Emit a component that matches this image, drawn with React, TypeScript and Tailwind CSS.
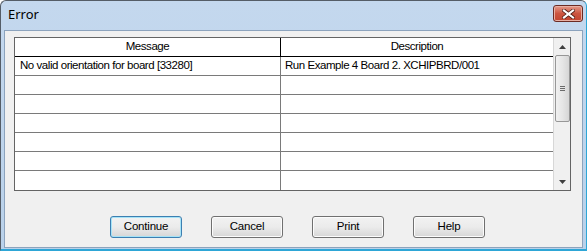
import React from "react";

const rows = [
  ["No valid orientation for board [33280]", "Run Example 4 Board 2. XCHIPBRD/001"],
  ["", ""],
  ["", ""],
  ["", ""],
  ["", ""],
  ["", ""],
  ["", ""],
];

function Btn({ label, focused }: { label: string; focused?: boolean }) {
  return (
    <div
      className={
        "w-[72px] h-[22px] rounded-[3px] border flex items-center justify-center text-[11.5px] tracking-[-0.2px] text-black bg-gradient-to-b from-[#f2f2f2] via-[#ebebeb] to-[#d6d6d6] " +
        (focused ? "border-[#3c7fb1] shadow-[inset_0_0_0_1px_#a6e3f7]" : "border-[#707070] shadow-[inset_0_0_0_1px_#fcfcfc]")
      }
    >
      {label}
    </div>
  );
}

export default function App() {
  return (
    <div
      className="w-[588px] h-[252px] bg-white overflow-hidden"
      style={{ fontFamily: '"Liberation Sans", Arial, sans-serif' }}
    >
      <div className="w-[587px] h-[251px] rounded-t-[6px] border border-[#555d67] border-r-[#2ea6d6] border-b-[#2ea6d6] border-b-2 bg-gradient-to-b from-[#c4d8ee] to-[#b9d1ea] flex flex-col">
        <div className="h-[29px] shrink-0 flex items-center justify-between pl-[7px] pr-[3px] pb-[2px]">
          <span className="text-[13px] text-black" style={{ fontFamily: '"Noto Sans", "Liberation Sans", sans-serif' }}>Error</span>
          <div className="w-[30px] h-[17px] mb-[2px] rounded-[3px] border border-[#6b2b24] bg-gradient-to-b from-[#e39a8b] via-[#cc5540] to-[#c24530] shadow-[inset_0_0_0_1px_#e8b0a4] flex items-center justify-center">
            <svg width="13" height="10" viewBox="0 0 13 10">
              <path d="M2 1.5 L11 8.5 M11 1.5 L2 8.5" stroke="#4a1a12" strokeWidth="3.6" strokeLinecap="square" />
              <path d="M2 1.5 L11 8.5 M11 1.5 L2 8.5" stroke="#ffffff" strokeWidth="2.2" strokeLinecap="square" />
            </svg>
          </div>
        </div>
        <div className="flex-1 mx-[3px] mb-[1px] border border-[#8ca3bd] bg-[#f0f0f0] flex flex-col">
          <div className="mt-[6px] ml-[9px] w-[557px] h-[154px] border border-[#646464] bg-white flex">
            <div className="flex-1 flex flex-col">
              <div className="h-[19px] flex border-b border-black text-[11.5px] tracking-[-0.45px] text-black">
                <div className="w-[266px] border-r border-black flex items-center justify-center">Message</div>
                <div className="flex-1 flex items-center justify-center">Description</div>
              </div>
              {rows.map((r, i) => (
                <div key={i} className="h-[19px] flex border-b border-[#7a7a7a] text-[11.5px] tracking-[-0.45px] text-black last:border-b-0">
                  <div className="w-[266px] border-r border-[#7a7a7a] pl-[5px] flex items-center">{r[0]}</div>
                  <div className="flex-1 pl-[4px] flex items-center">{r[1]}</div>
                </div>
              ))}
            </div>
            <div className="w-[17px] border-l border-[#d7d7d7] bg-[#f0f0f0] flex flex-col items-center">
              <div className="h-[17px] w-full flex items-center justify-center">
                <svg width="7" height="4" viewBox="0 0 7 4"><path d="M3.5 0 L7 4 L0 4 Z" fill="#404040" /></svg>
              </div>
              <div className="w-[15px] h-[67px] rounded-[2px] border border-[#979797] bg-gradient-to-r from-[#f0f0f0] via-[#e6e6e6] to-[#d6d6d6] flex flex-col items-center justify-center gap-[1px]">
                <div className="w-[5px] h-[1px] bg-[#6b6b6b]" />
                <div className="w-[5px] h-[1px] bg-[#6b6b6b]" />
                <div className="w-[5px] h-[1px] bg-[#6b6b6b]" />
              </div>
              <div className="flex-1" />
              <div className="h-[17px] w-full flex items-center justify-center">
                <svg width="7" height="4" viewBox="0 0 7 4"><path d="M0 0 L7 0 L3.5 4 Z" fill="#404040" /></svg>
              </div>
            </div>
          </div>
          <div className="mt-[25px] ml-[105px] flex gap-[29px]">
            <Btn label="Continue" focused />
            <Btn label="Cancel" />
            <Btn label="Print" />
            <Btn label="Help" />
          </div>
        </div>
      </div>
    </div>
  );
}
